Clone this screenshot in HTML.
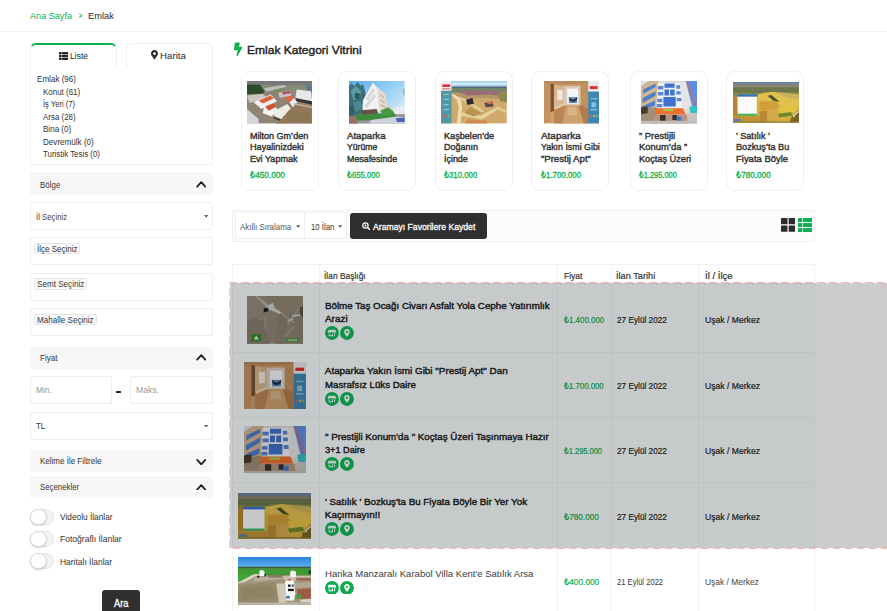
<!DOCTYPE html>
<html lang="tr"><head><meta charset="utf-8"><title>Emlak</title>
<style>
html,body{margin:0;padding:0;background:#fff}
body{width:887px;height:611px;overflow:hidden;position:relative;font-family:"Liberation Sans", "DejaVu Sans", sans-serif}
#p{position:absolute;left:0;top:0;width:887px;height:611px;overflow:hidden}
#p>div,#p>svg,#p>span{position:absolute;display:block}
#p>span{white-space:nowrap;line-height:1;transform-origin:0 50%}
</style></head>
<body><div id="p">
<div style="left:0px;top:31px;width:887px;height:1px;background:#f0f0f0;"></div>
<div style="left:30px;top:42.5px;width:87px;height:25.5px;border:1px solid #f0f0f0;border-bottom:none;border-top:2px solid #0cb050;border-radius:6px 6px 0 0;box-sizing:border-box;background:#fff;"></div>
<div style="left:125.5px;top:42.5px;width:87.5px;height:25px;border:1px solid #f0f0f0;border-bottom:none;border-radius:6px 6px 0 0;box-sizing:border-box;background:#fff;"></div>
<div style="left:30px;top:67px;width:183px;height:98px;border:1px solid #f0f0f0;border-top:none;box-sizing:border-box;"></div>
<svg style="left:58.5px;top:51.5px;width:9px;height:8px" viewBox="0 0 9 8"><g fill="#262626"><rect x="0" y="0" width="2.6" height="2.300"/><rect x="3.1" y="0" width="5.9" height="2.300"/><rect x="0" y="2.850" width="2.6" height="2.300"/><rect x="3.1" y="2.850" width="5.9" height="2.300"/><rect x="0" y="5.700" width="2.6" height="2.300"/><rect x="3.1" y="5.700" width="5.9" height="2.300"/></g></svg>
<svg style="left:150.5px;top:50px;width:7px;height:9.5px" viewBox="0 0 384 512"><path fill="#2b2b2b" d="M172 501C27 291 0 269 0 192 0 86 86 0 192 0s192 86 192 192c0 77-27 99-172 309-9 14-30 14-40 0zM192 272c44 0 80-36 80-80s-36-80-80-80-80 36-80 80 36 80 80 80z"/></svg>
<div style="left:30px;top:172.3px;width:183px;height:22.5px;background:#f7f7f7;border-radius:2px;"></div>
<svg style="left:195.95px;top:181.0px;width:10.5px;height:6.5px" viewBox="0 0 10.5 6.5"><path d="M1.200 5.600 L5.250 1.200 L9.300 5.600" fill="none" stroke="#1a1a1a" stroke-width="1.7" stroke-linecap="round" stroke-linejoin="round"/></svg>
<div style="left:30px;top:346.6px;width:183px;height:22px;background:#f7f7f7;border-radius:2px;"></div>
<svg style="left:195.95px;top:354.3px;width:10.5px;height:6.5px" viewBox="0 0 10.5 6.5"><path d="M1.200 5.600 L5.250 1.200 L9.300 5.600" fill="none" stroke="#1a1a1a" stroke-width="1.7" stroke-linecap="round" stroke-linejoin="round"/></svg>
<div style="left:30px;top:450.2px;width:183px;height:21.6px;background:#f7f7f7;border-radius:2px;"></div>
<svg style="left:195.95px;top:458.9px;width:10.5px;height:6.5px" viewBox="0 0 10.5 6.5"><path d="M1.200 0.900 L5.250 5.300 L9.300 0.900" fill="none" stroke="#1a1a1a" stroke-width="1.7" stroke-linecap="round" stroke-linejoin="round"/></svg>
<div style="left:30px;top:476.2px;width:183px;height:21.4px;background:#f7f7f7;border-radius:2px;"></div>
<svg style="left:195.95px;top:483.5px;width:10.5px;height:6.5px" viewBox="0 0 10.5 6.5"><path d="M1.200 5.600 L5.250 1.200 L9.300 5.600" fill="none" stroke="#1a1a1a" stroke-width="1.7" stroke-linecap="round" stroke-linejoin="round"/></svg>
<div style="left:30px;top:201.5px;width:183px;height:28.5px;border:1px solid #eeeeee;box-sizing:border-box;border-radius:2px;background:#fff;"></div>
<svg style="left:203.6px;top:215.2px;width:4.4px;height:2.8px" viewBox="0 0 8 5"><path d="M0 0h8L4 5z" fill="#666"/></svg>
<div style="left:30px;top:237px;width:183px;height:27.7px;border:1px solid #eeeeee;box-sizing:border-box;border-radius:2px;background:#fff;"></div>
<div style="left:34px;top:242.5px;width:46px;height:11.4px;border:1px solid #e4e4e4;box-sizing:border-box;border-radius:2.5px;background:#fafafa;"></div>
<div style="left:30px;top:272.9px;width:183px;height:27.7px;border:1px solid #eeeeee;box-sizing:border-box;border-radius:2px;background:#fff;"></div>
<div style="left:34px;top:278.4px;width:53px;height:11.4px;border:1px solid #e4e4e4;box-sizing:border-box;border-radius:2.5px;background:#fafafa;"></div>
<div style="left:30px;top:308.3px;width:183px;height:27.7px;border:1px solid #eeeeee;box-sizing:border-box;border-radius:2px;background:#fff;"></div>
<div style="left:34px;top:313.8px;width:62.7px;height:11.4px;border:1px solid #e4e4e4;box-sizing:border-box;border-radius:2.5px;background:#fafafa;"></div>
<div style="left:30px;top:375.8px;width:82.3px;height:28.2px;border:1px solid #eeeeee;box-sizing:border-box;border-radius:2px;background:#fff;"></div>
<div style="left:130.3px;top:375.8px;width:82.7px;height:28.2px;border:1px solid #eeeeee;box-sizing:border-box;border-radius:2px;background:#fff;"></div>
<div style="left:116.3px;top:390.7px;width:4.6px;height:2px;background:#222;border-radius:.5px;"></div>
<div style="left:30px;top:411.7px;width:183px;height:28px;border:1px solid #eeeeee;box-sizing:border-box;border-radius:2px;background:#fff;"></div>
<svg style="left:203.6px;top:424.6px;width:4.4px;height:2.8px" viewBox="0 0 8 5"><path d="M0 0h8L4 5z" fill="#666"/></svg>
<div style="left:30.3px;top:508.8px;width:24px;height:16px;background:#f3f3f3;border:1px solid #e6e6e6;border-radius:9px;box-sizing:border-box;"></div>
<div style="left:30.3px;top:508.5px;width:16.4px;height:16.4px;background:#fff;border:1px solid #dcdcdc;border-radius:50%;box-sizing:border-box;box-shadow:0 1px 1.5px rgba(0,0,0,.18);"></div>
<div style="left:30.3px;top:531.05px;width:24px;height:16px;background:#f3f3f3;border:1px solid #e6e6e6;border-radius:9px;box-sizing:border-box;"></div>
<div style="left:30.3px;top:530.75px;width:16.4px;height:16.4px;background:#fff;border:1px solid #dcdcdc;border-radius:50%;box-sizing:border-box;box-shadow:0 1px 1.5px rgba(0,0,0,.18);"></div>
<div style="left:30.3px;top:553.3px;width:24px;height:16px;background:#f3f3f3;border:1px solid #e6e6e6;border-radius:9px;box-sizing:border-box;"></div>
<div style="left:30.3px;top:553.0px;width:16.4px;height:16.4px;background:#fff;border:1px solid #dcdcdc;border-radius:50%;box-sizing:border-box;box-shadow:0 1px 1.5px rgba(0,0,0,.18);"></div>
<div style="left:102px;top:590px;width:38.4px;height:30px;background:#303030;border-radius:3px;"></div>
<svg style="left:233.8px;top:42.2px;width:8.4px;height:14.6px" viewBox="0 0 320 512"><path fill="#0cb050" d="M296 160H180.600l42.600-129.800C227.200 15 215.700 0 200 0H56C44 0 33.800 8.900 32.200 20.800l-32 240C-1.700 275.200 9.500 288 24 288h118.700L96.600 482.500c-3.600 15.200 8 29.500 23.300 29.500 8.400 0 16.400-4.400 20.800-12l176-304c9.300-15.900-2.200-36-20.700-36z"/></svg>
<div style="left:240.6px;top:71.3px;width:78px;height:120px;border:1px solid #f0f0f0;border-radius:9px;box-sizing:border-box;background:#fff;"></div>
<div style="left:337.6px;top:71.3px;width:78px;height:120px;border:1px solid #f0f0f0;border-radius:9px;box-sizing:border-box;background:#fff;"></div>
<div style="left:434.5px;top:71.3px;width:78px;height:120px;border:1px solid #f0f0f0;border-radius:9px;box-sizing:border-box;background:#fff;"></div>
<div style="left:531.4px;top:71.3px;width:78px;height:120px;border:1px solid #f0f0f0;border-radius:9px;box-sizing:border-box;background:#fff;"></div>
<div style="left:629.5px;top:71.3px;width:78px;height:120px;border:1px solid #f0f0f0;border-radius:9px;box-sizing:border-box;background:#fff;"></div>
<div style="left:726.4px;top:71.3px;width:78px;height:120px;border:1px solid #f0f0f0;border-radius:9px;box-sizing:border-box;background:#fff;"></div>
<div style="left:231.5px;top:209.7px;width:583.5px;height:32.3px;border:1px solid #f1f1f1;box-sizing:border-box;background:#fcfcfc;"></div>
<div style="left:234.7px;top:212.1px;width:70.2px;height:26.8px;border:1px solid #efefef;box-sizing:border-box;background:#fff;"></div>
<div style="left:304.9px;top:212.1px;width:41.9px;height:26.8px;border:1px solid #efefef;border-left:none;box-sizing:border-box;background:#fff;"></div>
<svg style="left:295.5px;top:224.7px;width:4.4px;height:3px" viewBox="0 0 8 5"><path d="M0 0h8L4 5z" fill="#5a5a5a"/></svg>
<svg style="left:338.1px;top:224.7px;width:4.4px;height:3px" viewBox="0 0 8 5"><path d="M0 0h8L4 5z" fill="#5a5a5a"/></svg>
<div style="left:350.3px;top:212.6px;width:136.7px;height:26px;background:#2f2f2f;border-radius:3px;"></div>
<svg style="left:361.9px;top:221.9px;width:8.5px;height:8.5px" viewBox="0 0 16 16"><circle cx="6.5" cy="6.5" r="5" fill="none" stroke="#fff" stroke-width="2.2"/><path d="M10.5 10.5L15 15" stroke="#fff" stroke-width="2.6" stroke-linecap="round"/><path d="M4.300 6.500h4.400M6.500 4.300v4.400" stroke="#fff" stroke-width="1.500"/></svg>
<svg style="left:780.8px;top:217.9px;width:14.2px;height:13.8px" viewBox="0 0 14.2 13.8"><g fill="#2c2c2c"><rect x="0" y="0" width="6.5" height="6.300" rx=".5"/><rect x="7.700" y="0" width="6.500" height="6.300" rx=".5"/><rect x="0" y="7.500" width="6.500" height="6.300" rx=".5"/><rect x="7.700" y="7.500" width="6.500" height="6.300" rx=".5"/></g></svg>
<svg style="left:797.7px;top:217.9px;width:14.4px;height:14px" viewBox="0 0 14.4 14"><g fill="#0cb050"><rect x="0" y="0" width="4.300" height="4.100" rx=".6"/><rect x="5" y="0" width="9.400" height="4.100" rx=".6"/><rect x="0" y="4.950" width="4.300" height="4.100" rx=".6"/><rect x="5" y="4.950" width="9.400" height="4.100" rx=".6"/><rect x="0" y="9.900" width="4.300" height="4.100" rx=".6"/><rect x="5" y="9.900" width="9.400" height="4.100" rx=".6"/></g></svg>
<div style="left:231.5px;top:264px;width:583.5px;height:360px;border:1px solid #f2f2f2;border-bottom:none;box-sizing:border-box;background:#fff;"></div>
<div style="left:232.5px;top:283px;width:581.5px;height:265.5px;background:#f8fdfd;"></div>
<div style="left:318.6px;top:264px;width:1px;height:360px;background:#f2f2f2;"></div>
<div style="left:557.3px;top:264px;width:1px;height:360px;background:#f2f2f2;"></div>
<div style="left:610.5px;top:264px;width:1px;height:360px;background:#f2f2f2;"></div>
<div style="left:698.4px;top:264px;width:1px;height:360px;background:#f2f2f2;"></div>
<div style="left:231.5px;top:282.5px;width:583.5px;height:1px;background:#f2f2f2;"></div>
<div style="left:231.5px;top:351.5px;width:583.5px;height:1px;background:#f2f2f2;"></div>
<div style="left:231.5px;top:417.0px;width:583.5px;height:1px;background:#f2f2f2;"></div>
<div style="left:231.5px;top:481.8px;width:583.5px;height:1px;background:#f2f2f2;"></div>
<div style="left:231.5px;top:548.1px;width:583.5px;height:1px;background:#f2f2f2;"></div>
<svg style="left:324.9px;top:325.9px;width:13.9px;height:13.9px" viewBox="0 0 26 26"><circle cx="13" cy="13" r="13" fill="#10b859"/><g fill="#fff"><path d="M6.800 7h12.400l1.800 3.600c0 1.300-1 2-2 2s-2-.7-2-1.700c0 1-1 1.700-2 1.700s-2-.7-2-1.700c0 1-1 1.700-2 1.700s-2-.7-2-1.700c0 1-1 1.700-2 1.700-.6 0-2-.5-2-2z" opacity=".95"/><path d="M7 13.800h1.600v3.600h4.800v-3.600H15V19H7zM17.200 13.800h1.600V19h-1.600z"/></g></svg>
<svg style="left:340px;top:325.9px;width:13.9px;height:13.9px" viewBox="0 0 26 26"><circle cx="13" cy="13" r="13" fill="#10b859"/><path fill="#fff" d="M13 5.800c-3 0-5.200 2.300-5.200 5.100 0 3.400 4 8 5.200 9.300 1.200-1.300 5.200-5.900 5.200-9.300 0-2.800-2.200-5.100-5.200-5.100zm0 7.200a2.100 2.100 0 1 1 0-4.200 2.100 2.100 0 0 1 0 4.200z"/></svg>
<svg style="left:324.9px;top:391.8px;width:13.9px;height:13.9px" viewBox="0 0 26 26"><circle cx="13" cy="13" r="13" fill="#10b859"/><g fill="#fff"><path d="M6.800 7h12.400l1.800 3.600c0 1.300-1 2-2 2s-2-.7-2-1.700c0 1-1 1.700-2 1.700s-2-.7-2-1.700c0 1-1 1.700-2 1.700s-2-.7-2-1.700c0 1-1 1.700-2 1.700-.6 0-2-.5-2-2z" opacity=".95"/><path d="M7 13.800h1.600v3.600h4.800v-3.600H15V19H7zM17.200 13.800h1.600V19h-1.600z"/></g></svg>
<svg style="left:340px;top:391.8px;width:13.9px;height:13.9px" viewBox="0 0 26 26"><circle cx="13" cy="13" r="13" fill="#10b859"/><path fill="#fff" d="M13 5.800c-3 0-5.200 2.300-5.200 5.100 0 3.400 4 8 5.200 9.300 1.200-1.300 5.200-5.900 5.200-9.300 0-2.800-2.200-5.100-5.200-5.100zm0 7.200a2.100 2.100 0 1 1 0-4.200 2.100 2.100 0 0 1 0 4.200z"/></svg>
<svg style="left:324.9px;top:456.8px;width:13.9px;height:13.9px" viewBox="0 0 26 26"><circle cx="13" cy="13" r="13" fill="#10b859"/><g fill="#fff"><path d="M6.800 7h12.400l1.800 3.600c0 1.300-1 2-2 2s-2-.7-2-1.700c0 1-1 1.700-2 1.700s-2-.7-2-1.700c0 1-1 1.700-2 1.700s-2-.7-2-1.700c0 1-1 1.700-2 1.700-.6 0-2-.5-2-2z" opacity=".95"/><path d="M7 13.800h1.600v3.600h4.800v-3.600H15V19H7zM17.200 13.800h1.600V19h-1.600z"/></g></svg>
<svg style="left:340px;top:456.8px;width:13.9px;height:13.9px" viewBox="0 0 26 26"><circle cx="13" cy="13" r="13" fill="#10b859"/><path fill="#fff" d="M13 5.800c-3 0-5.200 2.300-5.200 5.100 0 3.400 4 8 5.200 9.300 1.200-1.300 5.200-5.900 5.200-9.300 0-2.800-2.200-5.100-5.200-5.100zm0 7.200a2.100 2.100 0 1 1 0-4.200 2.100 2.100 0 0 1 0 4.200z"/></svg>
<svg style="left:324.9px;top:522.2px;width:13.9px;height:13.9px" viewBox="0 0 26 26"><circle cx="13" cy="13" r="13" fill="#10b859"/><g fill="#fff"><path d="M6.800 7h12.400l1.800 3.600c0 1.300-1 2-2 2s-2-.7-2-1.700c0 1-1 1.700-2 1.700s-2-.7-2-1.700c0 1-1 1.700-2 1.700s-2-.7-2-1.700c0 1-1 1.700-2 1.700-.6 0-2-.5-2-2z" opacity=".95"/><path d="M7 13.800h1.600v3.600h4.800v-3.600H15V19H7zM17.200 13.800h1.600V19h-1.600z"/></g></svg>
<svg style="left:340px;top:522.2px;width:13.9px;height:13.9px" viewBox="0 0 26 26"><circle cx="13" cy="13" r="13" fill="#10b859"/><path fill="#fff" d="M13 5.800c-3 0-5.200 2.300-5.200 5.100 0 3.400 4 8 5.200 9.300 1.200-1.300 5.200-5.900 5.200-9.300 0-2.800-2.200-5.100-5.200-5.100zm0 7.200a2.100 2.100 0 1 1 0-4.200 2.100 2.100 0 0 1 0 4.200z"/></svg>
<svg style="left:324.9px;top:580.5px;width:13.9px;height:13.9px" viewBox="0 0 26 26"><circle cx="13" cy="13" r="13" fill="#0dab51"/><g fill="#fff"><path d="M6.800 7h12.400l1.800 3.600c0 1.300-1 2-2 2s-2-.7-2-1.700c0 1-1 1.700-2 1.700s-2-.7-2-1.700c0 1-1 1.700-2 1.700s-2-.7-2-1.700c0 1-1 1.700-2 1.700-.6 0-2-.5-2-2z" opacity=".95"/><path d="M7 13.800h1.600v3.600h4.800v-3.600H15V19H7zM17.200 13.800h1.600V19h-1.600z"/></g></svg>
<svg style="left:340px;top:580.5px;width:13.9px;height:13.9px" viewBox="0 0 26 26"><circle cx="13" cy="13" r="13" fill="#0dab51"/><path fill="#fff" d="M13 5.800c-3 0-5.200 2.300-5.200 5.100 0 3.400 4 8 5.200 9.300 1.200-1.300 5.200-5.900 5.200-9.300 0-2.800-2.200-5.100-5.200-5.100zm0 7.200a2.100 2.100 0 1 1 0-4.200 2.100 2.100 0 0 1 0 4.200z"/></svg>
<svg style="left:247px;top:81.2px;width:65.30000000000001px;height:42.4px" viewBox="0 0 100 100" preserveAspectRatio="none"><rect width="100" height="100" fill="#8f8574"/>
<rect width="100" height="9" fill="#77767a"/>
<rect y="9" width="100" height="16" fill="#848d78"/>
<path d="M0 8 L20 9 L27 24 L24 30 L0 31z" fill="#2c4a2a"/>
<path d="M26 17 L58 9 L60 14 L30 25z" fill="#b9c0be"/>
<path d="M40 22 L56 16 L60 26 L44 32z" fill="#7d8a5e"/>
<path d="M0 66 L18 90 L18 100 L0 100z" fill="#d3d6dc"/>
<path d="M62 50 L100 58 L100 100 L44 100 L60 70z" fill="#96795c"/>
<path d="M64 70 L96 74 L96 96 L60 96z" fill="#8a7650"/>
<path d="M0 34 L24 30 L30 40 L4 52z" fill="#c9c6c0"/>
<path d="M10 50 L36 32 L46 48 L22 66z" fill="#f3f1f1"/>
<path d="M18 46 L36 34 L41 41 L24 53z" fill="#d9603a"/>
<path d="M26 62 L40 54 L47 68 L38 84 L24 76z" fill="#f4f3f3"/>
<path d="M28 60 L40 53 L45 61 L33 70z" fill="#d4532d"/>
<path d="M40 72 L62 54 L67 64 L52 90 L42 84z" fill="#efece4"/>
<path d="M42 84 L52 90 L50 94 L40 88z" fill="#4a4036"/>
<path d="M58 40 L68 33 L74 44 L64 52z" fill="#e2633f"/>
<path d="M65 50 L72 40 L77 50 L70 62z" fill="#eceef6"/>
<path d="M48 28 L66 22 L68 34 L50 40z" fill="#c9bfc8"/>
<path d="M54 26 L66 23 L67 29 L55 32z" fill="#b34a6a"/>
<path d="M76 20 L98 24 L100 50 L74 42z" fill="#e8e8ea"/>
<path d="M74 40 L100 48 L100 56 L76 48z" fill="#3a3430"/>
<path d="M72 52 L100 60 L100 64 L72 56z" fill="#c2b092"/>
<path d="M90 10 L100 10 L100 24 L92 22z" fill="#5a7a96"/></svg>
<svg style="left:348.9px;top:81.2px;width:55.700000000000045px;height:42.4px" viewBox="0 0 100 100" preserveAspectRatio="none"><defs><linearGradient id="g2s" x1="0" y1="0" x2="1" y2="1"><stop offset="0" stop-color="#58aeea"/><stop offset=".55" stop-color="#a6d6f6"/><stop offset="1" stop-color="#eef6fb"/></linearGradient></defs>
<rect width="100" height="100" fill="url(#g2s)"/>
<path d="M0 12 L5 5 L9 13 L15 2 L21 11 L25 7 L30 30 L26 48 L30 62 L24 76 L10 92 L0 96z" fill="#3c6f78"/>
<path d="M3 22 L13 12 L22 24 L19 40 L8 46z" fill="#5a99a6"/>
<path d="M5 52 L20 46 L25 62 L12 74z" fill="#4d8792"/>
<path d="M11 27 L20 30 L18 44 L10 40z" fill="#2d5a60"/>
<path d="M0 60 L8 56 L10 76 L0 84z" fill="#2f5f66"/>
<path d="M25 46 L43 4 L50 14 L66 32 L68 72 L24 74z" fill="#f2f1f4"/>
<path d="M50 14 L66 32 L68 72 L54 72z" fill="#e2dbd2"/>
<path d="M30 42 L43 16 L47 22 L34 48z M28 58 L46 30 L48 38 L31 64z" fill="#dcd6da"/>
<path d="M56 30 L63 38 L63 42 L56 34z M56 42 L64 50 L64 54 L56 46z M57 54 L65 60 L65 64 L57 58z" fill="#c9b49a"/>
<path d="M67 62 L75 58 L77 78 L67 78z" fill="#dbcfb8"/>
<path d="M80 64 L100 56 L100 82 L80 80z" fill="#e9eaee"/>
<rect x="97" y="18" width="3" height="16" fill="#b9b4b0"/>
<path d="M0 84 L100 78 L100 100 L0 100z" fill="#97949a"/>
<path d="M10 80 L34 73 L60 77 L78 70 L86 84 L40 92 L14 94z" fill="#3f8c3c"/>
<path d="M56 70 L70 62 L80 72 L74 82 L60 80z" fill="#4a9a44"/>
<path d="M22 69 L50 66 L52 76 L24 79z" fill="#6a5048"/>
<path d="M0 86 L10 80 L16 100 L0 100z" fill="#9c6f66"/>
<path d="M40 92 L86 84 L100 86 L100 100 L36 100z" fill="#cfd1da"/>
<path d="M84 88 L100 86 L100 97 L86 97z" fill="#4766ae"/></svg>
<svg style="left:440.8px;top:81.2px;width:65.80000000000001px;height:42.4px" viewBox="0 0 100 100" preserveAspectRatio="none"><rect width="100" height="100" fill="#cfaa6c"/>
<rect width="100" height="14" fill="#a9d4f2"/>
<rect y="4" width="100" height="5" fill="#d6eaf8"/>
<rect y="13" width="100" height="4" fill="#566a7c"/>
<rect y="16.500" width="100" height="11" fill="#748468"/>
<path d="M16 28 L100 27 L100 44 L70 40 L40 42 L16 36z" fill="#b3966a"/>
<path d="M28 26 L44 22 L60 24 L82 22 L96 30 L94 36 L72 32 L40 34z" fill="#9a6c78"/>
<path d="M18 30 L30 40 L32 60 L30 100 L24 100 L27 62 L24 44 L16 34z" fill="#ecdcae"/>
<path d="M32 74 L60 82 L86 60 L90 64 L62 90 L30 82z" fill="#e6d39c"/>
<path d="M30 38 L46 50 L66 72 L62 74 L44 56 L28 42z" fill="#e2cf9e"/>
<path d="M86 60 L100 70 L100 76 L84 66z" fill="#e0cc98"/>
<path d="M38 44 L48 40 L50 54 L40 56z" fill="#2e2a30"/>
<path d="M66 52 L78 48 L80 60 L68 62z" fill="#5a4650"/>
<path d="M70 50 L78 48 L79 53 L71 55z" fill="#e06a5a"/>
<path d="M86 30 L100 28 L100 50 L90 48z" fill="#8a8a4c"/>
<path d="M44 62 L62 76 L50 84 L36 76z" fill="#b9924e"/>
<path d="M40 90 L70 94 L70 100 L36 100z" fill="#d08a50"/>
<rect width="16" height="100" fill="#4f98a6"/>
<rect width="16" height="23" fill="#f0eeee"/>
<rect x="2" y="8" width="12" height="6" fill="#dc3030"/>
<rect x="2" y="17" width="12" height="3" fill="#e07a7a"/>
<rect x="4" y="80" width="4" height="6" fill="#e0604a"/><rect x="10" y="80" width="4" height="6" fill="#4fc07a"/>
<path d="M4 30 h8 v3 h-8z M4 42 h8 v3 h-8z M4 54 h8 v3 h-8z M4 66 h8 v3 h-8z" fill="#8cc4cc"/></svg>
<svg style="left:543.8px;top:81.2px;width:55.200000000000045px;height:42.4px" viewBox="0 0 100 100" preserveAspectRatio="none"><rect width="100" height="100" fill="#cf9f6e"/>
<path d="M0 0 H80 V8 H0z" fill="#b98a5e"/>
<path d="M0 4 L12 8 L12 96 L0 100z" fill="#c29464"/>
<path d="M12 6 L18 8 L18 70 L12 74z" fill="#7a5030"/>
<path d="M18 8 L36 14 L36 56 L18 64z" fill="#d9b48c"/>
<path d="M24 20 L34 22 L34 44 L24 46z" fill="#efe6dc"/>
<path d="M18 62 L40 50 L40 58 L34 100 L18 100z" fill="#b98654"/>
<path d="M18 62 L40 50 L42 54 L20 68z" fill="#e6cfae"/>
<path d="M80 0 L66 12 L66 56 L80 70z" fill="#c2925e"/>
<path d="M80 66 L62 52 L62 60 L72 100 L80 100z" fill="#b07c4a"/>
<path d="M36 12 H66 V58 H36z" fill="#d8cbbb"/>
<path d="M42 18 H62 V54 H42z" fill="#f4f6f9"/>
<path d="M45 38 H60 V52 H45z" fill="#5f86b8"/>
<path d="M46 38 Q52 50 60 38 L60 44 Q52 54 46 44z" fill="#1f2a3a"/>
<path d="M40 58 H62 L72 100 H34z" fill="#cda06e"/>
<path d="M44 62 H58 L60 80 H42z" fill="#d9b58a"/>
<rect x="80" width="20" height="100" fill="#3f86b2"/>
<rect x="80" width="20" height="25" fill="#ece9e8"/>
<rect x="83" y="12" width="14" height="7" fill="#dc3030"/>
<path d="M84 40 h12 v3 h-12z M86 50 h8 v12 h-8z M84 66 h12 v3 h-12z" fill="#8cc0d8"/>
<rect x="83" y="80" width="4" height="5" fill="#e0604a"/><rect x="89" y="80" width="4" height="5" fill="#e0a04a"/><rect x="94" y="80" width="4" height="5" fill="#4fc07a"/></svg>
<svg style="left:640.7px;top:81.2px;width:56.0px;height:42.4px" viewBox="0 0 100 100" preserveAspectRatio="none"><rect width="100" height="100" fill="#dcd9d6"/>
<path d="M0 0 H34 L30 20 L0 40z" fill="#d9e6f4"/>
<path d="M0 12 L14 0 L32 0 L28 66 L0 70z" fill="#d2b594"/>
<path d="M4 20 L26 6 L26 14 L4 30z M3 40 L26 24 L26 34 L3 52z M2 60 L25 46 L25 58 L2 70z" fill="#4f7fc8"/>
<path d="M30 4 H72 L74 64 H27z" fill="#eef0f4"/>
<path d="M42 6 H60 V16 H42z M42 20 H50 V34 H42z M52 20 H60 V34 H52z M40 38 H62 V60 H40z" fill="#3f72cc"/>
<path d="M30 12 H40 V20 H30z M30 26 H40 V34 H30z M29 42 H38 V50 H29z M28 54 H38 V62 H28z M63 10 H70 V18 H63z M63 24 H71 V32 H63z M64 40 H72 V48 H64z" fill="#5a86d2"/>
<path d="M70 8 L80 2 L92 64 L76 66z" fill="#e6e4e4"/>
<path d="M80 0 H100 V62 L92 64z" fill="#5f8fe4"/>
<path d="M80 2 L84 0 L100 56 L96 60z" fill="#c86a6a" opacity=".6"/>
<path d="M0 66 L28 62 L28 100 L0 100z" fill="#a08e76"/>
<path d="M0 62 L12 60 L12 76 L0 78z" fill="#4a3a2c"/>
<path d="M27 64 L75 64 L80 79 L25 79z" fill="#ee6e30"/>
<path d="M40 66 H58 V71 H40z" fill="#a8c84a"/>
<path d="M24 79 L82 79 L84 100 L22 100z" fill="#b39682"/>
<path d="M34 80 H44 V94 H34z M56 80 H64 V92 H56z" fill="#3a2e2a"/>
<path d="M64 84 H72 V96 H64z" fill="#3f78c8"/>
<path d="M86 60 H100 V76 H88z" fill="#34c4c0"/>
<path d="M82 76 H100 V100 H84z" fill="#c9c4c0"/>
<rect y="94" width="100" height="6" fill="#c2bcb6"/></svg>
<svg style="left:733.2px;top:82.4px;width:66.09999999999991px;height:40.6px" viewBox="0 0 100 100" preserveAspectRatio="none"><rect width="100" height="100" fill="#d6b046"/>
<rect width="100" height="7" fill="#6d82a6"/>
<rect y="6" width="100" height="8" fill="#8a8272"/>
<rect y="13" width="100" height="16" fill="#6c774e"/>
<path d="M0 26 L40 30 L44 24 L100 26 L100 34 L0 36z" fill="#8d8a44"/>
<path d="M38 30 L60 24 L100 40 L100 60 L80 64 L50 44 L38 46z" fill="#e2c04e"/>
<path d="M60 24 L100 30 L100 44 L84 40z" fill="#c9b25a"/>
<path d="M52 34 L58 32 L70 48 L64 50z" fill="#4a5428"/>
<path d="M40 50 L66 46 L70 66 L42 70z" fill="#cf9f38"/>
<path d="M68 62 L96 56 L100 74 L72 78z" fill="#e6c242"/>
<path d="M40 72 L52 70 L52 100 L40 100z" fill="#b88a38"/>
<path d="M52 70 L66 68 L68 100 L52 100z" fill="#d4a84a"/>
<path d="M68 78 L88 74 L90 84 L70 88z" fill="#6f8a30"/>
<path d="M68 88 L90 84 L88 100 L68 100z" fill="#d8b040"/>
<path d="M88 88 Q93 74 100 68 L100 100 L86 100z" fill="#7a642c"/>
<path d="M90 84 Q94 74 100 70 L100 74 Q95 80 92 88z" fill="#e0d0a0"/>
<path d="M0 34 L7 34 L7 100 L0 100z" fill="#b8862e"/>
<rect x="7" y="35" width="29" height="44" fill="#fbfbfb"/>
<rect x="7" y="30.500" width="29" height="5.500" fill="#2f74c8"/>
<rect x="7" y="78" width="29" height="5" fill="#3fb45c"/>
<rect x="0" y="84" width="40" height="16" fill="#c29434"/>
<rect x="1" y="91" width="11" height="5" fill="#5a7ac0"/>
<rect y="97" width="100" height="3" fill="#8a7a3a"/></svg>
<svg style="left:247px;top:296px;width:56px;height:47.7px" viewBox="0 0 100 100" preserveAspectRatio="none"><rect width="100" height="100" fill="#91867a"/>
<path d="M0 0 H36 L26 44 L0 52z" fill="#978c7c"/>
<path d="M0 52 L26 44 L40 100 L0 100z" fill="#8a7f70"/>
<path d="M56 40 L100 30 V100 H50z" fill="#8c8174"/>
<path d="M36 0 H100 V30 L56 40z" fill="#948874"/>
<path d="M14 0 L18 0 L40 20 L52 30 L48 33 L34 22z" fill="#b9b5aa"/>
<path d="M34 22 L46 14 L50 26 L62 34 L58 38 L44 30 L36 30z" fill="#d0d0cc"/>
<path d="M30 26 L38 24 L38 32 L30 34z" fill="#1e1c1a"/>
<path d="M62 34 L86 56 L84 58 L60 38z" fill="#a39e90"/>
<path d="M70 60 L92 24 L95 26 L74 62z" fill="#a19c8e"/>
<path d="M72 50 L82 46 L83 50 L73 54z M80 40 L96 38 L96 42 L81 44z" fill="#c4c2ba"/>
<path d="M18 48 L36 40 L38 44 L20 52z M30 44 L34 44 L36 70 L32 70z" fill="#9c9686"/>
<path d="M66 84 L84 62 L86 64 L70 86z" fill="#a09a8c"/>
<path d="M94 24 L100 22 L100 44 L95 40z" fill="#5a5448"/>
<rect x="8" y="80" width="17" height="15" fill="#2f8a2c"/>
<path d="M12 91 L16.500 83 L21 91z" fill="#e6efe4"/>
<rect x="70" y="89" width="23" height="7" fill="#459a38"/>
<rect x="73" y="91" width="17" height="3" fill="#a8cc9c"/></svg>
<svg style="left:243.8px;top:361.5px;width:61.9px;height:47px" viewBox="0 0 100 100" preserveAspectRatio="none"><rect width="100" height="100" fill="#cf9f6e"/>
<path d="M0 0 H80 V8 H0z" fill="#b98a5e"/>
<path d="M0 4 L12 8 L12 96 L0 100z" fill="#c29464"/>
<path d="M12 6 L18 8 L18 70 L12 74z" fill="#7a5030"/>
<path d="M18 8 L36 14 L36 56 L18 64z" fill="#d9b48c"/>
<path d="M24 20 L34 22 L34 44 L24 46z" fill="#efe6dc"/>
<path d="M18 62 L40 50 L40 58 L34 100 L18 100z" fill="#b98654"/>
<path d="M18 62 L40 50 L42 54 L20 68z" fill="#e6cfae"/>
<path d="M80 0 L66 12 L66 56 L80 70z" fill="#c2925e"/>
<path d="M80 66 L62 52 L62 60 L72 100 L80 100z" fill="#b07c4a"/>
<path d="M36 12 H66 V58 H36z" fill="#d8cbbb"/>
<path d="M42 18 H62 V54 H42z" fill="#f4f6f9"/>
<path d="M45 38 H60 V52 H45z" fill="#5f86b8"/>
<path d="M46 38 Q52 50 60 38 L60 44 Q52 54 46 44z" fill="#1f2a3a"/>
<path d="M40 58 H62 L72 100 H34z" fill="#cda06e"/>
<path d="M44 62 H58 L60 80 H42z" fill="#d9b58a"/>
<rect x="80" width="20" height="100" fill="#3f86b2"/>
<rect x="80" width="20" height="25" fill="#ece9e8"/>
<rect x="83" y="12" width="14" height="7" fill="#dc3030"/>
<path d="M84 40 h12 v3 h-12z M86 50 h8 v12 h-8z M84 66 h12 v3 h-12z" fill="#8cc0d8"/>
<rect x="83" y="80" width="4" height="5" fill="#e0604a"/><rect x="89" y="80" width="4" height="5" fill="#e0a04a"/><rect x="94" y="80" width="4" height="5" fill="#4fc07a"/></svg>
<svg style="left:243.8px;top:425.7px;width:61.9px;height:47.7px" viewBox="0 0 100 100" preserveAspectRatio="none"><rect width="100" height="100" fill="#dcd9d6"/>
<path d="M0 0 H34 L30 20 L0 40z" fill="#d9e6f4"/>
<path d="M0 12 L14 0 L32 0 L28 66 L0 70z" fill="#d2b594"/>
<path d="M4 20 L26 6 L26 14 L4 30z M3 40 L26 24 L26 34 L3 52z M2 60 L25 46 L25 58 L2 70z" fill="#4f7fc8"/>
<path d="M30 4 H72 L74 64 H27z" fill="#eef0f4"/>
<path d="M42 6 H60 V16 H42z M42 20 H50 V34 H42z M52 20 H60 V34 H52z M40 38 H62 V60 H40z" fill="#3f72cc"/>
<path d="M30 12 H40 V20 H30z M30 26 H40 V34 H30z M29 42 H38 V50 H29z M28 54 H38 V62 H28z M63 10 H70 V18 H63z M63 24 H71 V32 H63z M64 40 H72 V48 H64z" fill="#5a86d2"/>
<path d="M70 8 L80 2 L92 64 L76 66z" fill="#e6e4e4"/>
<path d="M80 0 H100 V62 L92 64z" fill="#5f8fe4"/>
<path d="M80 2 L84 0 L100 56 L96 60z" fill="#c86a6a" opacity=".6"/>
<path d="M0 66 L28 62 L28 100 L0 100z" fill="#a08e76"/>
<path d="M0 62 L12 60 L12 76 L0 78z" fill="#4a3a2c"/>
<path d="M27 64 L75 64 L80 79 L25 79z" fill="#ee6e30"/>
<path d="M40 66 H58 V71 H40z" fill="#a8c84a"/>
<path d="M24 79 L82 79 L84 100 L22 100z" fill="#b39682"/>
<path d="M34 80 H44 V94 H34z M56 80 H64 V92 H56z" fill="#3a2e2a"/>
<path d="M64 84 H72 V96 H64z" fill="#3f78c8"/>
<path d="M86 60 H100 V76 H88z" fill="#34c4c0"/>
<path d="M82 76 H100 V100 H84z" fill="#c9c4c0"/>
<rect y="94" width="100" height="6" fill="#c2bcb6"/></svg>
<svg style="left:237.9px;top:493.3px;width:73.5px;height:45.6px" viewBox="0 0 100 100" preserveAspectRatio="none"><rect width="100" height="100" fill="#d6b046"/>
<rect width="100" height="7" fill="#6d82a6"/>
<rect y="6" width="100" height="8" fill="#8a8272"/>
<rect y="13" width="100" height="16" fill="#6c774e"/>
<path d="M0 26 L40 30 L44 24 L100 26 L100 34 L0 36z" fill="#8d8a44"/>
<path d="M38 30 L60 24 L100 40 L100 60 L80 64 L50 44 L38 46z" fill="#e2c04e"/>
<path d="M60 24 L100 30 L100 44 L84 40z" fill="#c9b25a"/>
<path d="M52 34 L58 32 L70 48 L64 50z" fill="#4a5428"/>
<path d="M40 50 L66 46 L70 66 L42 70z" fill="#cf9f38"/>
<path d="M68 62 L96 56 L100 74 L72 78z" fill="#e6c242"/>
<path d="M40 72 L52 70 L52 100 L40 100z" fill="#b88a38"/>
<path d="M52 70 L66 68 L68 100 L52 100z" fill="#d4a84a"/>
<path d="M68 78 L88 74 L90 84 L70 88z" fill="#6f8a30"/>
<path d="M68 88 L90 84 L88 100 L68 100z" fill="#d8b040"/>
<path d="M88 88 Q93 74 100 68 L100 100 L86 100z" fill="#7a642c"/>
<path d="M90 84 Q94 74 100 70 L100 74 Q95 80 92 88z" fill="#e0d0a0"/>
<path d="M0 34 L7 34 L7 100 L0 100z" fill="#b8862e"/>
<rect x="7" y="35" width="29" height="44" fill="#fbfbfb"/>
<rect x="7" y="30.500" width="29" height="5.500" fill="#2f74c8"/>
<rect x="7" y="78" width="29" height="5" fill="#3fb45c"/>
<rect x="0" y="84" width="40" height="16" fill="#c29434"/>
<rect x="1" y="91" width="11" height="5" fill="#5a7ac0"/>
<rect y="97" width="100" height="3" fill="#8a7a3a"/></svg>
<svg style="left:237.9px;top:557.4px;width:73.5px;height:47.4px" viewBox="0 0 100 100" preserveAspectRatio="none"><defs><linearGradient id="g5s" x1="0" y1="0" x2="0" y2="1"><stop offset="0" stop-color="#2b83dc"/><stop offset="1" stop-color="#63b2ee"/></linearGradient></defs>
<rect width="100" height="100" fill="#a2947c"/>
<rect width="100" height="22" fill="url(#g5s)"/>
<rect y="20.500" width="100" height="4" fill="#3c5a3a"/>
<rect y="24" width="100" height="14" fill="#3f9a34"/>
<path d="M0 36 L26 36 L22 42 L0 54z" fill="#43a238"/>
<path d="M96 28 h4 v8 h-4z" fill="#2a3a2a"/>
<path d="M22 40 L100 38 L100 100 L0 100 L0 56z" fill="#a2947c"/>
<path d="M22 36 L30 36 L10 52 L0 56 L0 54z" fill="#d9d2c6"/>
<path d="M24 42 L60 40 L62 46 L20 52z" fill="#b9b0a0"/>
<path d="M40 38 L62 38 L64 44 L42 44z" fill="#8a7a6a"/>
<path d="M0 60 L52 52 L60 96 L0 100z" fill="#94896a"/>
<path d="M6 66 L46 60 L50 84 L8 90z" fill="#8c8462"/>
<path d="M52 56 L64 56 L66 100 L56 100z" fill="#cfc6b4"/>
<path d="M60 40 L100 40 L100 50 L64 50z" fill="#c9bfae"/>
<path d="M78 44 L100 44 L100 50 L80 50z" fill="#9a6a50"/>
<path d="M76 54 L100 54 L100 64 L78 66z" fill="#b0a690"/>
<path d="M80 68 L100 66 L100 88 L82 88z" fill="#9c5c46"/>
<path d="M84 90 L100 88 L100 96 L86 96z" fill="#d4d0c8"/>
<path d="M78 80 L86 78 L86 88 L78 88z" fill="#4fa03c"/>
<path d="M29 30 L32 27 L36 30 L36 40 L29 40z" fill="#f4f4f4"/>
<path d="M36 36 h2 v5 h-2z M26 40 h3 v4 h-3z" fill="#2c2c2c"/>
<path d="M71 31 L74 28 L79 31 L79 42 L71 42z" fill="#f2f2f2"/>
<path d="M64 52 L70 46 L76 50 L78 78 L76 92 L66 92 L65 78z" fill="#f8f8f8"/>
<path d="M66 48 L70 46 L74 48 L70 50z" fill="#d04a3a"/>
<rect x="68" y="58" width="3.500" height="5" fill="#222"/><rect x="73" y="58" width="3" height="5" fill="#3a6a8a"/>
<rect x="68" y="67" width="8" height="5" fill="#1c1c1c"/>
<ellipse cx="68" cy="85" rx="2.500" ry="3" fill="#2f6fd0"/>
<rect y="96" width="100" height="4" fill="#bcb4a4"/></svg>
<span style="left:30.0px;top:11.00px;font-size:9.90px;font-weight:400;color:#0cb050;transform:scaleX(0.9215);">Ana Sayfa</span>
<span style="left:78.8px;top:12.00px;font-size:7.50px;font-weight:400;color:#0cb050;-webkit-text-stroke:0.3px #0cb050;transform:scaleX(0.7288);">&gt;</span>
<span style="left:88.0px;top:11.00px;font-size:9.90px;font-weight:400;color:#2b2b2b;transform:scaleX(0.9476);">Emlak</span>
<span style="left:70.0px;top:51.00px;font-size:9.70px;font-weight:400;color:#2b2b2b;transform:scaleX(0.8794);">Liste</span>
<span style="left:160.0px;top:51.00px;font-size:9.70px;font-weight:400;color:#2b2b2b;transform:scaleX(1.0060);">Harita</span>
<span style="left:36.7px;top:75.00px;font-size:9.20px;font-weight:400;color:#333;transform:scaleX(0.8779);">Emlak (96)</span>
<span style="left:43.0px;top:88.00px;font-size:9.20px;font-weight:400;color:#333;transform:scaleX(0.8670);">Konut (61)</span>
<span style="left:43.0px;top:100.00px;font-size:9.20px;font-weight:400;color:#333;transform:scaleX(0.8245);">İş Yeri (7)</span>
<span style="left:43.0px;top:113.00px;font-size:9.20px;font-weight:400;color:#333;transform:scaleX(0.8652);">Arsa (28)</span>
<span style="left:43.0px;top:125.00px;font-size:9.20px;font-weight:400;color:#333;transform:scaleX(0.8765);">Bina (0)</span>
<span style="left:43.0px;top:138.00px;font-size:9.20px;font-weight:400;color:#333;transform:scaleX(0.8806);">Devremülk (0)</span>
<span style="left:43.0px;top:150.00px;font-size:9.20px;font-weight:400;color:#333;transform:scaleX(0.8573);">Turistik Tesis (0)</span>
<span style="left:40.3px;top:180.00px;font-size:9.50px;font-weight:400;color:#333;transform:scaleX(0.8350);">Bölge</span>
<span style="left:40.3px;top:353.00px;font-size:9.50px;font-weight:400;color:#333;transform:scaleX(0.8449);">Fiyat</span>
<span style="left:40.3px;top:456.00px;font-size:9.50px;font-weight:400;color:#333;transform:scaleX(0.8427);">Kelime İle Filtrele</span>
<span style="left:40.3px;top:482.00px;font-size:9.50px;font-weight:400;color:#333;transform:scaleX(0.8247);">Seçenekler</span>
<span style="left:35.6px;top:212.00px;font-size:9.50px;font-weight:400;color:#444;transform:scaleX(0.8181);">İl Seçiniz</span>
<span style="left:36.7px;top:244.00px;font-size:9.50px;font-weight:400;color:#333;transform:scaleX(0.8447);">İlçe Seçiniz</span>
<span style="left:36.7px;top:279.00px;font-size:9.50px;font-weight:400;color:#333;transform:scaleX(0.8532);">Semt Seçiniz</span>
<span style="left:36.7px;top:315.00px;font-size:9.50px;font-weight:400;color:#333;transform:scaleX(0.8505);">Mahalle Seçiniz</span>
<span style="left:35.6px;top:385.00px;font-size:9.80px;font-weight:400;color:#9a9a9a;transform:scaleX(0.8533);">Min.</span>
<span style="left:135.5px;top:385.00px;font-size:9.80px;font-weight:400;color:#9a9a9a;transform:scaleX(0.8799);">Maks.</span>
<span style="left:35.6px;top:421.00px;font-size:9.50px;font-weight:400;color:#333;transform:scaleX(0.8293);">TL</span>
<span style="left:60.1px;top:512.00px;font-size:9.80px;font-weight:400;color:#333;transform:scaleX(0.8495);">Videolu İlanlar</span>
<span style="left:60.1px;top:534.00px;font-size:9.80px;font-weight:400;color:#333;transform:scaleX(0.8715);">Fotoğraflı İlanlar</span>
<span style="left:60.1px;top:557.00px;font-size:9.80px;font-weight:400;color:#333;transform:scaleX(0.8620);">Haritalı İlanlar</span>
<span style="left:113.9px;top:599.00px;font-size:10.00px;font-weight:400;color:#fff;-webkit-text-stroke:0.3px #fff;transform:scaleX(0.9189);">Ara</span>
<span style="left:247.3px;top:45.00px;font-size:11.50px;font-weight:400;color:#222;-webkit-text-stroke:0.4px #222;transform:scaleX(1.0453);">Emlak Kategori Vitrini</span>
<span style="left:250.1px;top:131.00px;font-size:9.40px;font-weight:400;color:#333;-webkit-text-stroke:0.4px #333;transform:scaleX(0.9627);">Milton Gm’den</span>
<span style="left:250.1px;top:142.00px;font-size:9.40px;font-weight:400;color:#333;-webkit-text-stroke:0.4px #333;transform:scaleX(0.9722);">Hayalinizdeki</span>
<span style="left:250.1px;top:154.00px;font-size:9.40px;font-weight:400;color:#333;-webkit-text-stroke:0.4px #333;transform:scaleX(0.9683);">Evi Yapmak</span>
<span style="left:250.1px;top:171.00px;font-size:8.80px;font-weight:400;color:#0cb050;-webkit-text-stroke:0.3px #0cb050;transform:scaleX(0.9330);">₺450.000</span>
<span style="left:347.1px;top:131.00px;font-size:9.40px;font-weight:400;color:#333;-webkit-text-stroke:0.4px #333;transform:scaleX(1.0258);">Ataparka</span>
<span style="left:347.1px;top:142.00px;font-size:9.40px;font-weight:400;color:#333;-webkit-text-stroke:0.4px #333;transform:scaleX(0.9260);">Yürüme</span>
<span style="left:347.1px;top:154.00px;font-size:9.40px;font-weight:400;color:#333;-webkit-text-stroke:0.4px #333;transform:scaleX(0.9444);">Mesafesinde</span>
<span style="left:347.1px;top:171.00px;font-size:8.80px;font-weight:400;color:#0cb050;-webkit-text-stroke:0.3px #0cb050;transform:scaleX(0.8795);">₺655.000</span>
<span style="left:444.0px;top:131.00px;font-size:9.40px;font-weight:400;color:#333;-webkit-text-stroke:0.4px #333;transform:scaleX(0.9727);">Kaşbelen’de</span>
<span style="left:444.0px;top:142.00px;font-size:9.40px;font-weight:400;color:#333;-webkit-text-stroke:0.4px #333;transform:scaleX(0.9590);">Doğanın</span>
<span style="left:444.0px;top:154.00px;font-size:9.40px;font-weight:400;color:#333;-webkit-text-stroke:0.4px #333;transform:scaleX(0.9508);">İçinde</span>
<span style="left:444.0px;top:171.00px;font-size:8.80px;font-weight:400;color:#0cb050;-webkit-text-stroke:0.3px #0cb050;transform:scaleX(0.8902);">₺310.000</span>
<span style="left:540.9px;top:131.00px;font-size:9.40px;font-weight:400;color:#333;-webkit-text-stroke:0.4px #333;transform:scaleX(1.0578);">Ataparka</span>
<span style="left:540.9px;top:142.00px;font-size:9.40px;font-weight:400;color:#333;-webkit-text-stroke:0.4px #333;transform:scaleX(0.9432);">Yakın İsmi Gibi</span>
<span style="left:540.9px;top:154.00px;font-size:9.40px;font-weight:400;color:#333;-webkit-text-stroke:0.4px #333;transform:scaleX(1.0278);">”Prestij Apt”</span>
<span style="left:540.9px;top:171.00px;font-size:8.80px;font-weight:400;color:#0cb050;-webkit-text-stroke:0.3px #0cb050;transform:scaleX(0.8964);">₺1.700.000</span>
<span style="left:639.0px;top:131.00px;font-size:9.40px;font-weight:400;color:#333;-webkit-text-stroke:0.4px #333;transform:scaleX(1.0069);">” Prestijli</span>
<span style="left:639.0px;top:142.00px;font-size:9.40px;font-weight:400;color:#333;-webkit-text-stroke:0.4px #333;transform:scaleX(1.0051);">Konum’da ”</span>
<span style="left:639.0px;top:154.00px;font-size:9.40px;font-weight:400;color:#333;-webkit-text-stroke:0.4px #333;transform:scaleX(0.9782);">Koçtaş Üzeri</span>
<span style="left:639.0px;top:171.00px;font-size:8.80px;font-weight:400;color:#0cb050;-webkit-text-stroke:0.3px #0cb050;transform:scaleX(0.8450);">₺1.295.000</span>
<span style="left:735.9px;top:131.00px;font-size:9.40px;font-weight:400;color:#333;-webkit-text-stroke:0.4px #333;transform:scaleX(0.9721);">’ Satılık ’</span>
<span style="left:735.9px;top:142.00px;font-size:9.40px;font-weight:400;color:#333;-webkit-text-stroke:0.4px #333;transform:scaleX(0.9722);">Bozkuş’ta Bu</span>
<span style="left:735.9px;top:154.00px;font-size:9.40px;font-weight:400;color:#333;-webkit-text-stroke:0.4px #333;transform:scaleX(1.0098);">Fiyata Böyle</span>
<span style="left:735.9px;top:171.00px;font-size:8.80px;font-weight:400;color:#0cb050;-webkit-text-stroke:0.3px #0cb050;transform:scaleX(0.9277);">₺780.000</span>
<span style="left:240.3px;top:223.00px;font-size:9.20px;font-weight:400;color:#555;transform:scaleX(0.8661);">Akıllı Sıralama</span>
<span style="left:310.5px;top:223.00px;font-size:9.20px;font-weight:400;color:#333;transform:scaleX(0.8480);">10 İlan</span>
<span style="left:372.9px;top:223.00px;font-size:9.30px;font-weight:400;color:#fff;-webkit-text-stroke:0.3px #fff;transform:scaleX(0.9295);">Aramayı Favorilere Kaydet</span>
<span style="left:324.4px;top:272.00px;font-size:9.30px;font-weight:400;color:#333;-webkit-text-stroke:0.2px #333;transform:scaleX(0.9065);">İlan Başlığı</span>
<span style="left:564.3px;top:272.00px;font-size:9.30px;font-weight:400;color:#333;-webkit-text-stroke:0.2px #333;transform:scaleX(0.9178);">Fiyat</span>
<span style="left:616.3px;top:272.00px;font-size:9.30px;font-weight:400;color:#333;-webkit-text-stroke:0.2px #333;transform:scaleX(0.9918);">İlan Tarihi</span>
<span style="left:705.0px;top:272.00px;font-size:9.30px;font-weight:400;color:#333;-webkit-text-stroke:0.2px #333;transform:scaleX(1.0307);">İl / İlçe</span>
<span style="left:324.8px;top:301.00px;font-size:9.90px;font-weight:400;color:#222;-webkit-text-stroke:0.42px #222;transform:scaleX(0.9888);">Bölme Taş Ocağı Civarı Asfalt Yola Cephe Yatırımlık</span>
<span style="left:324.8px;top:314.00px;font-size:9.90px;font-weight:400;color:#222;-webkit-text-stroke:0.42px #222;transform:scaleX(1.0044);">Arazi</span>
<span style="left:563.5px;top:316.00px;font-size:9.20px;font-weight:400;color:#0cb050;-webkit-text-stroke:0.2px #0cb050;transform:scaleX(0.8605);">₺1.400.000</span>
<span style="left:616.9px;top:316.00px;font-size:9.30px;font-weight:400;color:#262626;-webkit-text-stroke:0.2px #262626;transform:scaleX(0.8856);">27 Eylül 2022</span>
<span style="left:704.7px;top:316.00px;font-size:9.30px;font-weight:400;color:#262626;-webkit-text-stroke:0.2px #262626;transform:scaleX(0.9256);">Uşak / Merkez</span>
<span style="left:324.8px;top:366.00px;font-size:9.90px;font-weight:400;color:#222;-webkit-text-stroke:0.42px #222;">Ataparka Yakın İsmi Gibi "Prestij Apt" Dan</span>
<span style="left:324.8px;top:380.00px;font-size:9.90px;font-weight:400;color:#222;-webkit-text-stroke:0.42px #222;transform:scaleX(0.9790);">Masrafsız Lüks Daire</span>
<span style="left:563.5px;top:382.00px;font-size:9.20px;font-weight:400;color:#0cb050;-webkit-text-stroke:0.2px #0cb050;transform:scaleX(0.8498);">₺1.700.000</span>
<span style="left:616.9px;top:382.00px;font-size:9.30px;font-weight:400;color:#262626;-webkit-text-stroke:0.2px #262626;transform:scaleX(0.8856);">27 Eylül 2022</span>
<span style="left:704.7px;top:382.00px;font-size:9.30px;font-weight:400;color:#262626;-webkit-text-stroke:0.2px #262626;transform:scaleX(0.9256);">Uşak / Merkez</span>
<span style="left:324.8px;top:432.00px;font-size:9.90px;font-weight:400;color:#222;-webkit-text-stroke:0.42px #222;transform:scaleX(0.9877);">" Prestijli Konum'da " Koçtaş Üzeri Taşınmaya Hazır</span>
<span style="left:324.8px;top:445.00px;font-size:9.90px;font-weight:400;color:#222;-webkit-text-stroke:0.42px #222;transform:scaleX(0.9259);">3+1 Daire</span>
<span style="left:563.5px;top:447.00px;font-size:9.20px;font-weight:400;color:#0cb050;-webkit-text-stroke:0.2px #0cb050;transform:scaleX(0.8134);">₺1.295.000</span>
<span style="left:616.9px;top:447.00px;font-size:9.30px;font-weight:400;color:#262626;-webkit-text-stroke:0.2px #262626;transform:scaleX(0.8856);">27 Eylül 2022</span>
<span style="left:704.7px;top:447.00px;font-size:9.30px;font-weight:400;color:#262626;-webkit-text-stroke:0.2px #262626;transform:scaleX(0.9256);">Uşak / Merkez</span>
<span style="left:324.8px;top:497.00px;font-size:9.90px;font-weight:400;color:#222;-webkit-text-stroke:0.42px #222;transform:scaleX(0.9885);">' Satılık ' Bozkuş'ta Bu Fiyata Böyle Bir Yer Yok</span>
<span style="left:324.8px;top:510.00px;font-size:9.90px;font-weight:400;color:#222;-webkit-text-stroke:0.42px #222;">Kaçırmayın!!</span>
<span style="left:563.5px;top:513.00px;font-size:9.20px;font-weight:400;color:#0cb050;-webkit-text-stroke:0.2px #0cb050;transform:scaleX(0.8909);">₺780.000</span>
<span style="left:616.9px;top:513.00px;font-size:9.30px;font-weight:400;color:#262626;-webkit-text-stroke:0.2px #262626;transform:scaleX(0.8856);">27 Eylül 2022</span>
<span style="left:704.7px;top:513.00px;font-size:9.30px;font-weight:400;color:#262626;-webkit-text-stroke:0.2px #262626;transform:scaleX(0.9256);">Uşak / Merkez</span>
<span style="left:324.8px;top:569.00px;font-size:9.90px;font-weight:400;color:#3a3a3a;transform:scaleX(0.9659);">Harika Manzaralı Karabol Villa Kent'e Satılık Arsa</span>
<span style="left:563.5px;top:578.00px;font-size:9.20px;font-weight:400;color:#0cb050;-webkit-text-stroke:0.2px #0cb050;transform:scaleX(0.9011);">₺400.000</span>
<span style="left:616.9px;top:578.00px;font-size:9.30px;font-weight:400;color:#3a3a3a;transform:scaleX(0.8182);">21 Eylül 2022</span>
<span style="left:704.7px;top:578.00px;font-size:9.30px;font-weight:400;color:#444;transform:scaleX(0.9054);">Uşak / Merkez</span>
<div style="left:230px;top:283px;width:670px;height:265px;background:rgba(0,0,0,.2);z-index:5"></div><svg style="left:229px;top:282px;width:658px;height:267px;z-index:6" viewBox="0 0 658 267"><g fill="none" stroke="#fdb2b2" stroke-width="1"><path d="M0 0.500 H658" stroke-dasharray="8 4"/><path d="M0.500 7 V266" stroke-dasharray="7 5" stroke="#fcc6c6"/><path d="M4 266.500 H658" stroke-dasharray="7.500 4.500"/></g></svg>
</div></body></html>
